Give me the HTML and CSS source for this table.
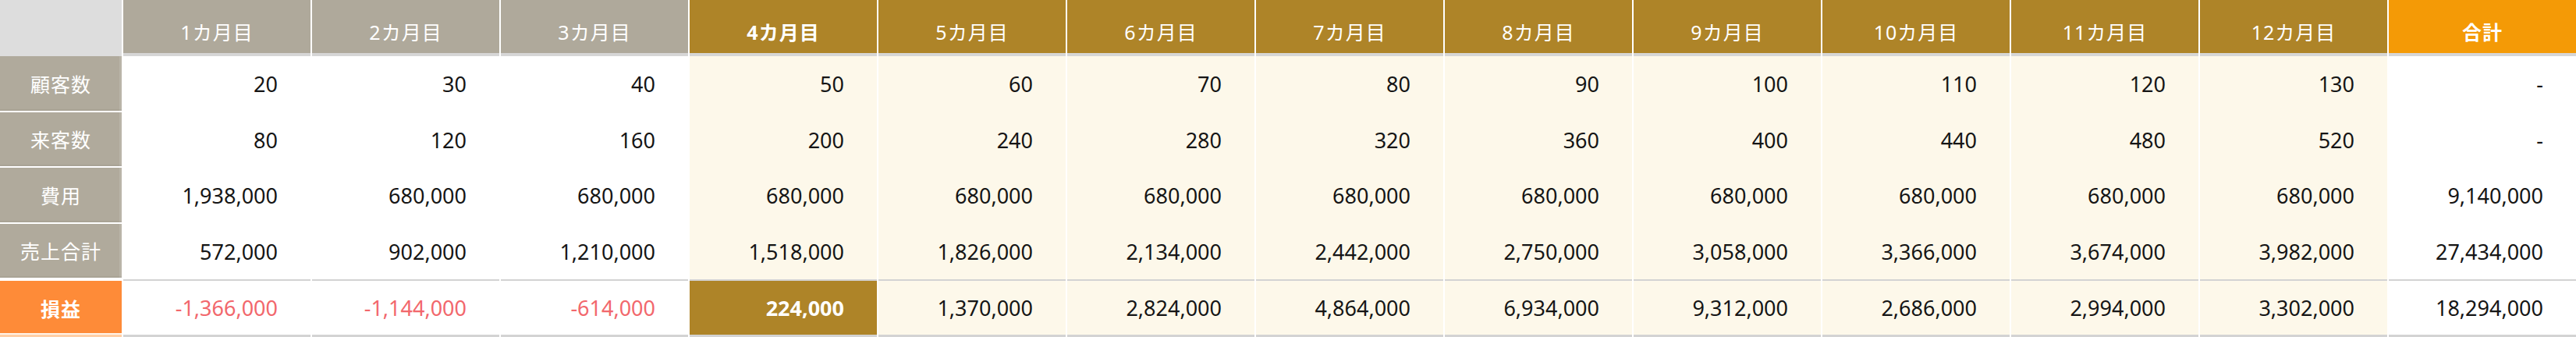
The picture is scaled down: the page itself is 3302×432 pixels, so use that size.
FILE: index.html
```html
<!DOCTYPE html>
<html lang="ja">
<head>
<meta charset="utf-8">
<title>収支シミュレーション</title>
<link rel="stylesheet" href="styles.css">
</head>
<body>
<div class="sheet">
  <div class="corner"></div>
  <div class="hd hd-grey">1カ月目</div>
  <div class="hd hd-grey">2カ月目</div>
  <div class="hd hd-grey">3カ月目</div>
  <div class="hd hd-gold bold">4カ月目</div>
  <div class="hd hd-gold">5カ月目</div>
  <div class="hd hd-gold">6カ月目</div>
  <div class="hd hd-gold">7カ月目</div>
  <div class="hd hd-gold">8カ月目</div>
  <div class="hd hd-gold">9カ月目</div>
  <div class="hd hd-gold">10カ月目</div>
  <div class="hd hd-gold">11カ月目</div>
  <div class="hd hd-gold">12カ月目</div>
  <div class="hd hd-total bold">合計</div>

  <div class="lbl">顧客数</div>
  <div class="num">20</div><div class="num">30</div><div class="num">40</div>
  <div class="num cream">50</div><div class="num cream">60</div><div class="num cream">70</div>
  <div class="num cream">80</div><div class="num cream">90</div><div class="num cream">100</div>
  <div class="num cream">110</div><div class="num cream">120</div><div class="num cream">130</div>
  <div class="num">-</div>

  <div class="lbl">来客数</div>
  <div class="num">80</div><div class="num">120</div><div class="num">160</div>
  <div class="num cream">200</div><div class="num cream">240</div><div class="num cream">280</div>
  <div class="num cream">320</div><div class="num cream">360</div><div class="num cream">400</div>
  <div class="num cream">440</div><div class="num cream">480</div><div class="num cream">520</div>
  <div class="num">-</div>

  <div class="lbl">費用</div>
  <div class="num">1,938,000</div><div class="num">680,000</div><div class="num">680,000</div>
  <div class="num cream">680,000</div><div class="num cream">680,000</div><div class="num cream">680,000</div>
  <div class="num cream">680,000</div><div class="num cream">680,000</div><div class="num cream">680,000</div>
  <div class="num cream">680,000</div><div class="num cream">680,000</div><div class="num cream">680,000</div>
  <div class="num">9,140,000</div>

  <div class="lbl">売上合計</div>
  <div class="num">572,000</div><div class="num">902,000</div><div class="num">1,210,000</div>
  <div class="num cream">1,518,000</div><div class="num cream">1,826,000</div><div class="num cream">2,134,000</div>
  <div class="num cream">2,442,000</div><div class="num cream">2,750,000</div><div class="num cream">3,058,000</div>
  <div class="num cream">3,366,000</div><div class="num cream">3,674,000</div><div class="num cream">3,982,000</div>
  <div class="num">27,434,000</div>

  <div class="lbl lbl-profit">損益</div>
  <div class="num pl neg">-1,366,000</div><div class="num pl neg">-1,144,000</div><div class="num pl neg">-614,000</div>
  <div class="num pl hit">224,000</div><div class="num pl cream">1,370,000</div><div class="num pl cream">2,824,000</div>
  <div class="num pl cream">4,864,000</div><div class="num pl cream">6,934,000</div><div class="num pl cream">9,312,000</div>
  <div class="num pl cream">2,686,000</div><div class="num pl cream">2,994,000</div><div class="num pl cream">3,302,000</div>
  <div class="num pl">18,294,000</div>
</div>
</body>
</html>
```
FILE: styles.css
```css
html, body {
  margin: 0;
  padding: 0;
  background: #ffffff;
}

.sheet {
  display: grid;
  grid-template-columns: 156px repeat(13, 240px);
  grid-template-rows: 72px 71.5px 71.5px 71.5px 71.5px 74px;
  column-gap: 2px;
  width: 3302px;
  height: 432px;
  overflow: hidden;
  background: #ffffff;
  font-family: "Noto Sans", "Noto Sans CJK JP", sans-serif;
}

.corner {
  background: #dddddd;
}

.hd {
  display: flex;
  align-items: center;
  justify-content: center;
  box-sizing: border-box;
  padding-top: 12px;
  border-bottom: 4px solid #d6d6d6;
  color: #ffffff;
  font-size: 25px;
  letter-spacing: 1px;
}

.hd-grey { background: #afa99b; }
.hd-gold { background: #ae8428; }
.hd-total { background: #f49a06; }

.bold { font-weight: 700; }

.lbl {
  display: flex;
  align-items: center;
  justify-content: center;
  box-sizing: border-box;
  background: #b0aa9c;
  border-bottom: 2px solid #ffffff;
  box-shadow: inset 0 -2px 0 rgba(0, 0, 0, 0.04), inset -3px 0 0 rgba(255, 255, 255, 0.12);
  color: #ffffff;
  font-size: 25px;
  letter-spacing: 1px;
}

.lbl-profit {
  border-bottom: 0;
  box-shadow: none;
  background: linear-gradient(to bottom, #ffffff 0 2px, #fe8b38 2px 69px, #fff4ea 69px 71px, #ffcfa6 71px);
  font-weight: 700;
}

.num {
  display: flex;
  align-items: center;
  justify-content: flex-end;
  box-sizing: border-box;
  padding-right: 42px;
  background: #ffffff;
  color: #151515;
  font-size: 27px;
}

.cream { background: #fdf8ea; }

.pl {
  border-top: 2px solid #d3d3d3;
  border-bottom: 3px solid #d3d3d3;
}

.neg { color: #f2676c; }

.hit {
  background: #ae8428;
  color: #ffffff;
  font-weight: 700;
}
```
